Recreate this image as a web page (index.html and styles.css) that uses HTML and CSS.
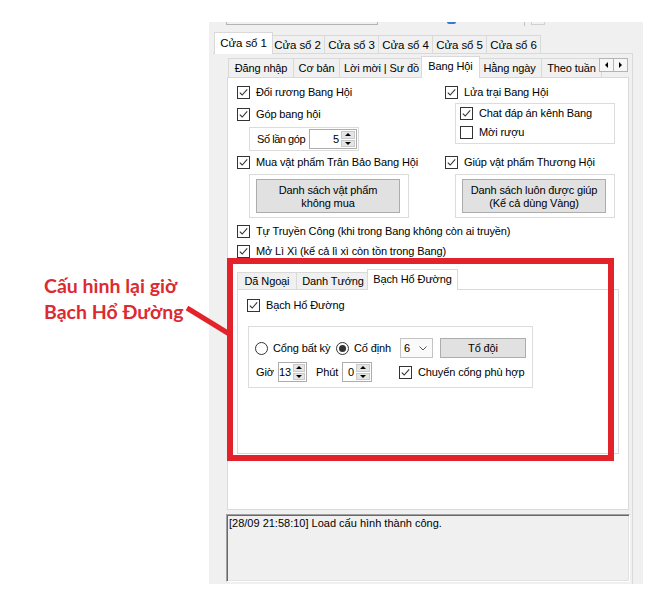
FILE: index.html
```html
<!DOCTYPE html>
<html lang="vi">
<head>
<meta charset="utf-8">
<title>Bang Hội</title>
<link rel="stylesheet" href="styles.css">
</head>
<body>
<div class="window">
  <div class="topbits">
    <span class="tb-box"></span>
    <span class="tb-radio"></span>
    <span class="tb-line"></span>
    <span class="tb-small"></span>
  </div>
  <div class="otabs">
    <div class="otab sel">Cửa sổ 1</div>
    <div class="otab">Cửa sổ 2</div>
    <div class="otab">Cửa sổ 3</div>
    <div class="otab">Cửa sổ 4</div>
    <div class="otab">Cửa sổ 5</div>
    <div class="otab">Cửa sổ 6</div>
  </div>
  <div class="opage">
    <div class="itabs">
      <div class="itab w-dn">Đăng nhập</div>
      <div class="itab w-cb">Cơ bản</div>
      <div class="itab w-lm">Lời mời | Sư đồ</div>
      <div class="itab sel w-bh">Bang Hội</div>
      <div class="itab w-hn">Hằng ngày</div>
      <div class="itab w-tt">Theo tuần</div>
      <div class="tab-scroll">
        <span class="arr"><i class="tri-l"></i></span>
        <span class="arr"><i class="tri-r"></i></span>
      </div>
    </div>
    <div class="ipage">
      <div class="upper">
        <div class="col col-left">
          <label class="cb"><svg class="box" viewBox="0 0 13 13"><rect x=".5" y=".5" width="12" height="12" fill="#fff" stroke="#333"/><path d="M2.8 6.6 5.2 9l5-5.6" fill="none" stroke="#333" stroke-width="1.1"/></svg><span>Đổi rương Bang Hội</span></label>
          <label class="cb mt9"><svg class="box" viewBox="0 0 13 13"><rect x=".5" y=".5" width="12" height="12" fill="#fff" stroke="#333"/><path d="M2.8 6.6 5.2 9l5-5.6" fill="none" stroke="#333" stroke-width="1.1"/></svg><span>Góp bang hội</span></label>
          <div class="grp grp-gop">
            <span class="lbl-gop">Số lần góp</span>
            <div class="num num-gop"><span class="val">5</span><span class="spin"><i class="up"></i><i class="down"></i></span></div>
          </div>
          <label class="cb mt5"><svg class="box" viewBox="0 0 13 13"><rect x=".5" y=".5" width="12" height="12" fill="#fff" stroke="#333"/><path d="M2.8 6.6 5.2 9l5-5.6" fill="none" stroke="#333" stroke-width="1.1"/></svg><span>Mua vật phẩm Trân Bảo Bang Hội</span></label>
          <div class="grp grp-btn">
            <div class="btn btn-big">Danh sách vật phẩm<br>không mua</div>
          </div>
        </div>
        <div class="col col-right">
          <label class="cb"><svg class="box" viewBox="0 0 13 13"><rect x=".5" y=".5" width="12" height="12" fill="#fff" stroke="#333"/><path d="M2.8 6.6 5.2 9l5-5.6" fill="none" stroke="#333" stroke-width="1.1"/></svg><span>Lửa trại Bang Hội</span></label>
          <div class="grp grp-lua">
            <label class="cb"><svg class="box" viewBox="0 0 13 13"><rect x=".5" y=".5" width="12" height="12" fill="#fff" stroke="#333"/><path d="M2.8 6.6 5.2 9l5-5.6" fill="none" stroke="#333" stroke-width="1.1"/></svg><span>Chat đáp án kênh Bang</span></label>
            <label class="cb mt6"><svg class="box" viewBox="0 0 13 13"><rect x=".5" y=".5" width="12" height="12" fill="#fff" stroke="#333"/></svg><span>Mời rượu</span></label>
          </div>
          <label class="cb mt12"><svg class="box" viewBox="0 0 13 13"><rect x=".5" y=".5" width="12" height="12" fill="#fff" stroke="#333"/><path d="M2.8 6.6 5.2 9l5-5.6" fill="none" stroke="#333" stroke-width="1.1"/></svg><span>Giúp vật phẩm Thương Hội</span></label>
          <div class="grp grp-btn grp-btn-r">
            <div class="btn btn-big">Danh sách luôn được giúp<br>(Kể cả dùng Vàng)</div>
          </div>
        </div>
      </div>
      <label class="cb mt7"><svg class="box" viewBox="0 0 13 13"><rect x=".5" y=".5" width="12" height="12" fill="#fff" stroke="#333"/><path d="M2.8 6.6 5.2 9l5-5.6" fill="none" stroke="#333" stroke-width="1.1"/></svg><span>Tự Truyền Công (khi trong Bang không còn ai truyền)</span></label>
      <label class="cb mt7"><svg class="box" viewBox="0 0 13 13"><rect x=".5" y=".5" width="12" height="12" fill="#fff" stroke="#333"/><path d="M2.8 6.6 5.2 9l5-5.6" fill="none" stroke="#333" stroke-width="1.1"/></svg><span>Mở Lì Xì (kể cả lì xì còn tồn trong Bang)</span></label>

      <div class="subctrl">
        <div class="stabs">
          <div class="stab w-dngoai">Dã Ngoại</div>
          <div class="stab w-dtuong">Danh Tướng</div>
          <div class="stab sel w-bhd">Bạch Hổ Đường</div>
        </div>
        <div class="spage">
          <label class="cb"><svg class="box" viewBox="0 0 13 13"><rect x=".5" y=".5" width="12" height="12" fill="#fff" stroke="#333"/><path d="M2.8 6.6 5.2 9l5-5.6" fill="none" stroke="#333" stroke-width="1.1"/></svg><span>Bạch Hổ Đường</span></label>
          <div class="grp grp-bhd">
            <div class="row">
              <label class="rd rd1"><svg class="box" viewBox="0 0 13 13"><circle cx="6.5" cy="6.5" r="6" fill="#fff" stroke="#333"/></svg><span>Cổng bất kỳ</span></label>
              <label class="rd rd2"><svg class="box" viewBox="0 0 13 13"><circle cx="6.5" cy="6.5" r="6" fill="#fff" stroke="#333"/><circle cx="6.5" cy="6.5" r="3.5" fill="#333"/></svg><span>Cố định</span></label>
              <div class="combo"><span>6</span><svg class="chev" viewBox="0 0 8 5"><path d="M.5.5 4 4 7.5.5" fill="none" stroke="#555"/></svg></div>
              <div class="btn btn-todoi">Tổ đội</div>
            </div>
            <div class="row row2">
              <span class="lbl-gio">Giờ</span>
              <div class="num num-gio"><span class="val">13</span><span class="spin"><i class="up"></i><i class="down"></i></span></div>
              <span class="lbl-phut">Phút</span>
              <div class="num num-phut"><span class="val">0</span><span class="spin"><i class="up"></i><i class="down"></i></span></div>
              <label class="cb cb-chuyen"><svg class="box" viewBox="0 0 13 13"><rect x=".5" y=".5" width="12" height="12" fill="#fff" stroke="#333"/><path d="M2.8 6.6 5.2 9l5-5.6" fill="none" stroke="#333" stroke-width="1.1"/></svg><span>Chuyển cổng phù hợp</span></label>
            </div>
          </div>
        </div>
      </div>
      <div class="redbox"></div>
    </div>
    <div class="log">[28/09 21:58:10] Load cấu hình thành công.</div>
  </div>
</div>
<div class="note">Cấu hình lại giờ<br>Bạch Hổ Đường</div>
<svg class="arrow" viewBox="0 0 52 36"><line x1="4" y1="5" x2="48" y2="32" stroke="#e3232b" stroke-width="5"/></svg>
</body>
</html>
```
FILE: styles.css
```css
html, body {
  margin: 0;
}
body {
  position: relative;
  width: 654px;
  height: 598px;
  box-sizing: border-box;
  padding-top: 22px;
  background: #fff;
  font-family: "Liberation Sans", Arial, sans-serif;
  font-size: 11px;
  letter-spacing: -0.12px;
  color: #000;
  overflow: hidden;
}

.window {
  margin-left: 209px;
  width: 434px;
  height: 562px;
  background: #f0f0f0;
}

/* partial controls cut off at the top */
.topbits {
  display: flex;
  align-items: flex-start;
  height: 3px;
}
.tb-box {
  margin-left: 17px;
  width: 150px;
  height: 2px;
  border: 1px solid #b4b4b4;
  border-top: 0;
}
.tb-radio {
  margin-left: 69px;
  width: 9px;
  height: 2px;
  background: #3a76d2;
  border-radius: 0 0 5px 5px;
}
.tb-line {
  margin-left: 68px;
  width: 1px;
  height: 4px;
  background: #c4c4c4;
}
.tb-small {
  margin-left: 6px;
  width: 12px;
  height: 2px;
  border: 1px solid #d0d0d0;
  border-top: 0;
}

/* outer tabs */
.otabs {
  position: relative;
  z-index: 1;
  display: flex;
  align-items: flex-end;
  height: 21px;
  margin-top: 7px;
  padding-left: 7px;
}
.otab {
  box-sizing: border-box;
  width: 55px;
  height: 18px;
  margin-right: -1px;
  border: 1px solid #d9d9d9;
  border-bottom: 0;
  background: #f0f0f0;
  display: flex;
  align-items: center;
  justify-content: center;
  white-space: nowrap;
  font-size: 11.5px;
}
.otab.sel {
  position: relative;
  z-index: 2;
  width: 59px;
  height: 22px;
  margin-left: -2px;
  margin-right: -3px;
  margin-bottom: -1px;
  background: #fff;
  padding-bottom: 1px;
}

.opage {
  box-sizing: border-box;
  margin-left: 4px;
  width: 420px;
  height: 531px;
  border-top: 1px solid #d9d9d9;
  border-right: 1px solid #d9d9d9;
  padding: 2px 0 0 13px;
}

/* inner tabs */
.itabs {
  position: relative;
  z-index: 1;
  display: flex;
  align-items: flex-end;
  height: 21px;
  padding-left: 2px;
}
.itab {
  box-sizing: border-box;
  height: 19px;
  margin-right: -1px;
  border: 1px solid #d9d9d9;
  border-bottom: 0;
  background: #f0f0f0;
  display: flex;
  align-items: center;
  justify-content: center;
  white-space: nowrap;
  overflow: hidden;
}
.w-dn { width: 66px; }
.w-cb { width: 47px; }
.w-lm { width: 85px; }
.w-hn { width: 65px; }
.w-tt { width: 61px; }
.itab.sel {
  position: relative;
  z-index: 2;
  width: 59px;
  height: 22px;
  margin-left: -2px;
  margin-right: -3px;
  margin-bottom: -1px;
  background: #fff;
  padding-bottom: 3px;
}
.tab-scroll {
  position: absolute;
  z-index: 3;
  left: 373px;
  top: 2px;
  display: flex;
}
.arr {
  box-sizing: border-box;
  width: 15px;
  height: 14px;
  margin-right: -1px;
  border: 1px solid #b4b4b4;
  background: #f7f7f7;
  display: flex;
  align-items: center;
  justify-content: center;
}
.tri-l {
  width: 0;
  height: 0;
  border-top: 3px solid transparent;
  border-bottom: 3px solid transparent;
  border-right: 3px solid #000;
}
.tri-r {
  width: 0;
  height: 0;
  border-top: 3px solid transparent;
  border-bottom: 3px solid transparent;
  border-left: 3px solid #000;
}

.ipage {
  position: relative;
  box-sizing: border-box;
  margin-left: 1px;
  width: 402px;
  height: 433px;
  border: 1px solid #d9d9d9;
  background: #fff;
  padding: 8px 0 0 9px;
}

.upper {
  display: flex;
}
.col {
  display: flex;
  flex-direction: column;
  align-items: flex-start;
}
.col-left { width: 208px; }

/* checkbox / radio rows */
.cb, .rd {
  display: flex;
  align-items: center;
  height: 13px;
  line-height: 13px;
  white-space: nowrap;
}
.box {
  flex: none;
  width: 13px;
  height: 13px;
  margin-right: 6px;
}
.rd .box { margin-right: 5px; }

.mt5 { margin-top: 5px; }
.mt6 { margin-top: 6px; }
.mt7 { margin-top: 7px; }
.mt9 { margin-top: 9px; }
.mt12 { margin-top: 12px; }

/* group boxes */
.grp {
  box-sizing: border-box;
  border: 1px solid #dcdcdc;
}
.grp-gop {
  display: flex;
  align-items: center;
  margin: 6px 0 0 12px;
  width: 110px;
  height: 24px;
  padding: 1px 1px 1px 7px;
}
.lbl-gop {
  width: 52px;
  white-space: nowrap;
  letter-spacing: -0.45px;
}
.grp-btn {
  margin: 5px 0 0 12px;
  width: 160px;
  height: 44px;
  padding: 4px 0 0 6px;
}
.grp-btn-r { margin-left: 10px; }
.grp-lua {
  margin: 4px 0 0 10px;
  width: 160px;
  height: 41px;
  padding: 3px 0 0 4px;
}

/* buttons */
.btn {
  box-sizing: border-box;
  border: 1px solid #adadad;
  background: #e1e1e1;
  text-align: center;
  white-space: nowrap;
}
.btn-big {
  width: 144px;
  height: 34px;
  line-height: 13px;
  padding-top: 4px;
}
.btn-todoi {
  width: 86px;
  height: 20px;
  line-height: 18px;
  margin-left: 7px;
}

/* numeric up-down */
.num {
  box-sizing: border-box;
  display: flex;
  height: 20px;
  border: 1px solid #acacac;
  background: #fff;
}
.num .val {
  flex: 1;
  text-align: right;
  padding-right: 2px;
  line-height: 18px;
}
.num-gop { width: 48px; }
.num-gio { width: 29px; }
.num-phut { width: 30px; }
.spin {
  width: 14px;
  display: flex;
  flex-direction: column;
  gap: 1px;
  padding: 1px 1px 1px 0;
}
.spin i {
  flex: 1;
  box-sizing: border-box;
  border: 1px solid #c9c9c9;
  background: #e5e5e5;
  display: flex;
  align-items: center;
  justify-content: center;
}
.spin .up::after {
  content: "";
  border-left: 3px solid transparent;
  border-right: 3px solid transparent;
  border-bottom: 3px solid #000;
}
.spin .down::after {
  content: "";
  border-left: 3px solid transparent;
  border-right: 3px solid transparent;
  border-top: 3px solid #000;
}

/* third level tab control */
.subctrl {
  margin-top: 11px;
}
.stabs {
  position: relative;
  z-index: 1;
  display: flex;
  align-items: flex-end;
  height: 20px;
}
.stab {
  box-sizing: border-box;
  height: 17px;
  margin-right: -1px;
  border: 1px solid #d9d9d9;
  border-bottom: 0;
  background: #f0f0f0;
  display: flex;
  align-items: center;
  justify-content: center;
  white-space: nowrap;
}
.w-dngoai { width: 60px; }
.w-dtuong { width: 74px; }
.stab.sel {
  position: relative;
  z-index: 2;
  width: 91px;
  height: 21px;
  margin-left: -2px;
  margin-right: -3px;
  margin-bottom: -1px;
  background: #fff;
  padding-bottom: 3px;
}
.spage {
  box-sizing: border-box;
  width: 382px;
  height: 165px;
  border: 1px solid #d9d9d9;
  background: #fff;
  padding: 9px 0 0 9px;
}
.grp-bhd {
  margin: 14px 0 0 1px;
  width: 285px;
  height: 62px;
  padding: 11px 0 0 6px;
}
.row {
  display: flex;
  align-items: center;
  height: 20px;
}
.row2 {
  margin-top: 4px;
  padding-left: 1px;
}
.rd1 { width: 81px; }
.rd2 { width: 64px; }
.combo {
  box-sizing: border-box;
  width: 33px;
  height: 20px;
  border: 1px solid #c4c4c4;
  background: #fafafa;
  display: flex;
  align-items: center;
  justify-content: space-between;
  padding: 0 5px 0 3px;
}
.chev {
  width: 8px;
  height: 5px;
}
.lbl-gio { width: 22px; }
.lbl-phut {
  width: 26px;
  margin-left: 9px;
}
.cb-chuyen { margin-left: 27px; }

/* annotation overlay */
.redbox {
  position: absolute;
  left: -1px;
  top: 180px;
  width: 387px;
  height: 203px;
  box-sizing: border-box;
  border: 6px solid #e3232b;
  z-index: 5;
}

.log {
  box-sizing: border-box;
  margin-top: 4px;
  width: 404px;
  height: 68px;
  border: 1px solid;
  border-color: #a0a0a0 #fff #fff #a0a0a0;
  box-shadow: inset 1px 1px 0 #696969, inset -1px -1px 0 #e3e3e3;
  background: #f0f0f0;
  padding: 2px 2px;
  line-height: 13px;
  letter-spacing: 0;
  white-space: nowrap;
}

.note {
  position: absolute;
  left: 44px;
  top: 273px;
  font-family: Lato, "Open Sans", sans-serif;
  font-weight: 700;
  font-size: 19.5px;
  letter-spacing: 0;
  line-height: 26px;
  color: #dc2a30;
  white-space: nowrap;
}
.arrow {
  position: absolute;
  left: 183px;
  top: 303px;
  width: 52px;
  height: 36px;
}
```
